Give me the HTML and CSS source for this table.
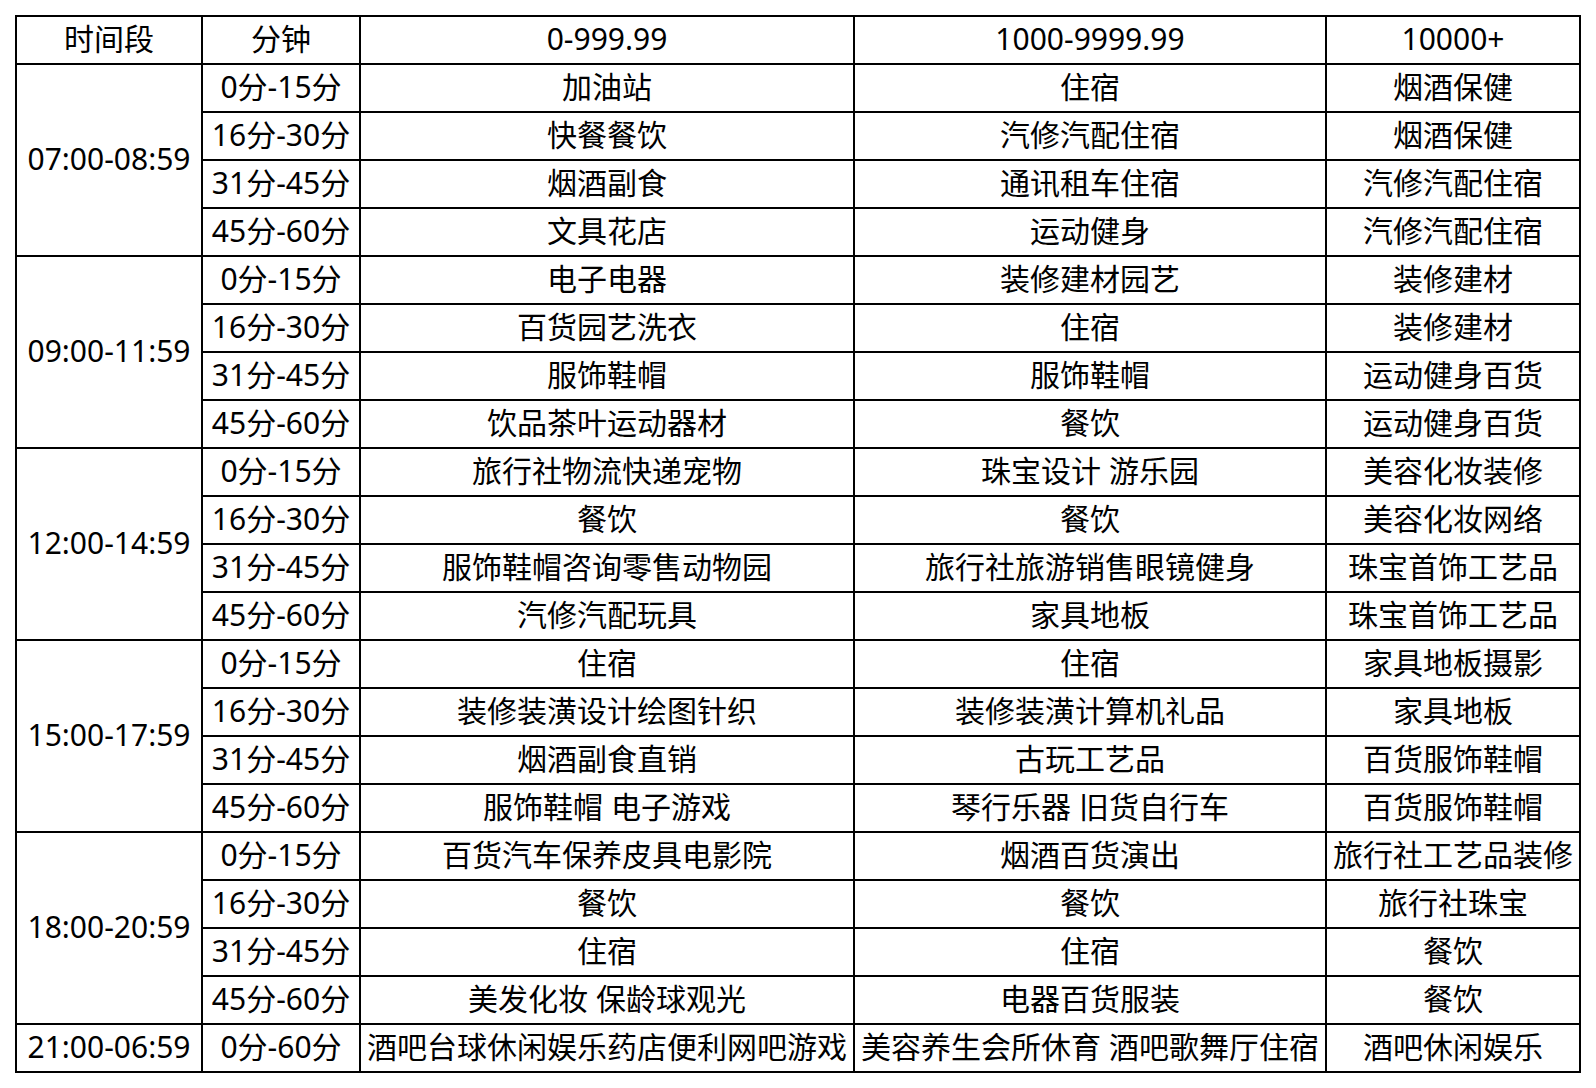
FILE: index.html
```html
<!DOCTYPE html>
<html lang="zh-CN">
<head>
<meta charset="utf-8">
<title>时间段</title>
<link rel="stylesheet" href="styles.css">
</head>
<body>
<table class="grid">
  <colgroup>
    <col class="c-period">
    <col class="c-min">
    <col class="c-a">
    <col class="c-b">
    <col class="c-c">
  </colgroup>
  <tbody>
    <tr><td>时间段</td><td>分钟</td><td>0-999.99</td><td>1000-9999.99</td><td>10000+</td></tr>

    <tr><td rowspan="4">07:00-08:59</td><td>0分-15分</td><td>加油站</td><td>住宿</td><td>烟酒保健</td></tr>
    <tr><td>16分-30分</td><td>快餐餐饮</td><td>汽修汽配住宿</td><td>烟酒保健</td></tr>
    <tr><td>31分-45分</td><td>烟酒副食</td><td>通讯租车住宿</td><td>汽修汽配住宿</td></tr>
    <tr><td>45分-60分</td><td>文具花店</td><td>运动健身</td><td>汽修汽配住宿</td></tr>

    <tr><td rowspan="4">09:00-11:59</td><td>0分-15分</td><td>电子电器</td><td>装修建材园艺</td><td>装修建材</td></tr>
    <tr><td>16分-30分</td><td>百货园艺洗衣</td><td>住宿</td><td>装修建材</td></tr>
    <tr><td>31分-45分</td><td>服饰鞋帽</td><td>服饰鞋帽</td><td>运动健身百货</td></tr>
    <tr><td>45分-60分</td><td>饮品茶叶运动器材</td><td>餐饮</td><td>运动健身百货</td></tr>

    <tr><td rowspan="4">12:00-14:59</td><td>0分-15分</td><td>旅行社物流快递宠物</td><td>珠宝设计 游乐园</td><td>美容化妆装修</td></tr>
    <tr><td>16分-30分</td><td>餐饮</td><td>餐饮</td><td>美容化妆网络</td></tr>
    <tr><td>31分-45分</td><td>服饰鞋帽咨询零售动物园</td><td>旅行社旅游销售眼镜健身</td><td>珠宝首饰工艺品</td></tr>
    <tr><td>45分-60分</td><td>汽修汽配玩具</td><td>家具地板</td><td>珠宝首饰工艺品</td></tr>

    <tr><td rowspan="4">15:00-17:59</td><td>0分-15分</td><td>住宿</td><td>住宿</td><td>家具地板摄影</td></tr>
    <tr><td>16分-30分</td><td>装修装潢设计绘图针织</td><td>装修装潢计算机礼品</td><td>家具地板</td></tr>
    <tr><td>31分-45分</td><td>烟酒副食直销</td><td>古玩工艺品</td><td>百货服饰鞋帽</td></tr>
    <tr><td>45分-60分</td><td>服饰鞋帽 电子游戏</td><td>琴行乐器 旧货自行车</td><td>百货服饰鞋帽</td></tr>

    <tr><td rowspan="4">18:00-20:59</td><td>0分-15分</td><td>百货汽车保养皮具电影院</td><td>烟酒百货演出</td><td>旅行社工艺品装修</td></tr>
    <tr><td>16分-30分</td><td>餐饮</td><td>餐饮</td><td>旅行社珠宝</td></tr>
    <tr><td>31分-45分</td><td>住宿</td><td>住宿</td><td>餐饮</td></tr>
    <tr><td>45分-60分</td><td>美发化妆 保龄球观光</td><td>电器百货服装</td><td>餐饮</td></tr>

    <tr><td>21:00-06:59</td><td>0分-60分</td><td>酒吧台球休闲娱乐药店便利网吧游戏</td><td>美容养生会所休育 酒吧歌舞厅住宿</td><td>酒吧休闲娱乐</td></tr>
  </tbody>
</table>
</body>
</html>
```

FILE: styles.css
```css
html, body {
  margin: 0;
  padding: 0;
  background: #ffffff;
}

body {
  padding: 15px 0 0 15px;
}

.grid {
  border-collapse: collapse;
  table-layout: fixed;
  width: 1566px;
  font-family: "Noto Sans", "Noto Sans CJK SC", sans-serif;
  font-size: 30px;
  color: #000000;
}

.c-period { width: 186px; }
.c-min { width: 158px; }
.c-a { width: 494px; }
.c-b { width: 472px; }
.c-c { width: 254px; }

.grid td {
  border: 2px solid #000000;
  height: 48px;
  padding: 0 0 2px 0;
  text-align: center;
  vertical-align: middle;
  line-height: 42px;
  white-space: nowrap;
  overflow: hidden;
  box-sizing: border-box;
}
```
